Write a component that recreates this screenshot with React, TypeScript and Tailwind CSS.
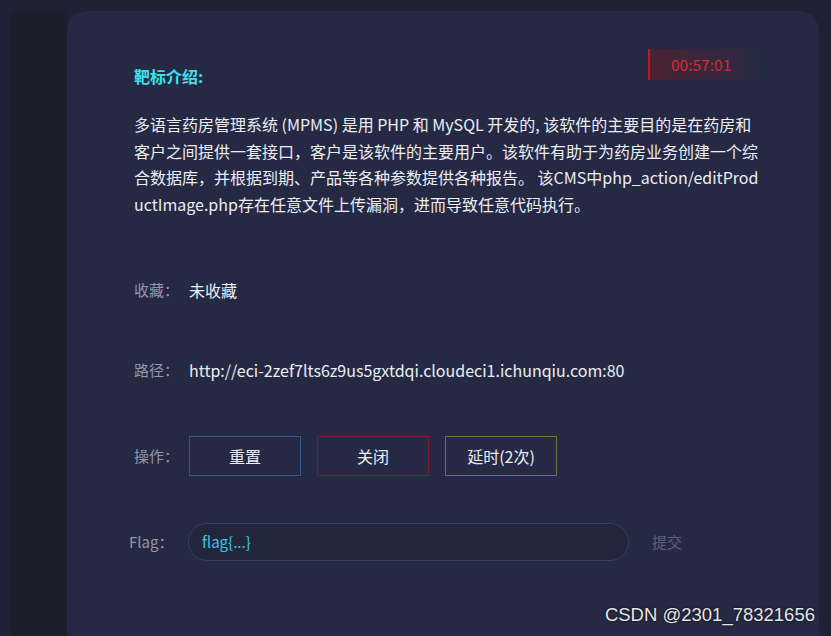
import React from "react";

const cjk = '"Noto Sans CJK SC", "Noto Sans", sans-serif';

export default function App() {
  return (
    <div
      className="relative flex h-[636px] w-[831px] overflow-hidden bg-[#1e2133]"
      style={{ fontFamily: cjk }}
    >
      <div className="w-[11px] shrink-0 bg-[#1f2236]" />
      <div className="flex flex-1 flex-col pt-[11px]">
        <div className="flex flex-1">
          <div className="w-[56px] shrink-0 bg-[#1b1e2b]" />
          <div className="flex-1 rounded-t-[20px] bg-[#252944] pl-[67px] pr-[52px] pt-[38px]">
            <div className="flex items-start justify-between">
              <div className="mt-[17px] text-[16px] font-bold leading-[20px] text-[#3de0ea]">
                靶标介绍:
              </div>
              <div className="flex h-[31px] w-[119px] items-center border-l-2 border-[#c8121c] bg-gradient-to-r from-[#4a2234] to-[#252944] pl-[21px] text-[15.5px] text-[#d42a32]">
                00:57:01
              </div>
            </div>
            <div className="mt-[25px] whitespace-nowrap text-[16px] leading-[26.5px] text-[#eceef4]">
              <div>多语言药房管理系统 (MPMS) 是用 PHP 和 MySQL 开发的, 该软件的主要目的是在药房和</div>
              <div>客户之间提供一套接口，客户是该软件的主要用户。该软件有助于为药房业务创建一个综</div>
              <div>合数据库，并根据到期、产品等各种参数提供各种报告。 该CMS中php_action/editProd</div>
              <div>uctImage.php存在任意文件上传漏洞，进而导致任意代码执行。</div>
            </div>
            <div className="mt-[60px] flex h-[26px] items-center">
              <div className="w-[55px] text-[15px] text-[#9397a8]">收藏：</div>
              <div className="text-[16px] text-[#eceef4]">未收藏</div>
            </div>
            <div className="mt-[54px] flex h-[26px] items-center">
              <div className="w-[55px] text-[15px] text-[#9397a8]">路径：</div>
              <div className="text-[16px] text-[#eceef4]">
                http://eci-2zef7lts6z9us5gxtdqi.cloudeci1.ichunqiu.com:80
              </div>
            </div>
            <div className="mt-[53px] flex items-center">
              <div className="w-[55px] text-[15px] text-[#9397a8]">操作：</div>
              <div className="flex gap-[16px]">
                <button className="h-[40px] w-[112px] border border-[#2d5d8c] text-[16px] text-[#eceef4]">
                  重置
                </button>
                <button className="h-[40px] w-[112px] border border-[#7e1a25] text-[16px] text-[#eceef4]">
                  关闭
                </button>
                <button className="h-[40px] w-[112px] border border-[#6a7640] text-[16px] text-[#eceef4]">
                  延时(2次)
                </button>
              </div>
            </div>
            <div className="-ml-[5px] mt-[47px] flex items-center">
              <div className="w-[59px] text-[15px] text-[#9397a8]">Flag：</div>
              <div className="flex h-[38px] w-[441px] items-center rounded-full border border-[#3a3f58] bg-[#22263c] pl-[13px] text-[15px] text-[#3cc6e0]">
                flag{"{...}"}
              </div>
              <div className="ml-[23px] text-[15px] text-[#5f6477]">提交</div>
            </div>
          </div>
          <div className="w-[12px] shrink-0" />
        </div>
      </div>
      <div
        className="absolute bottom-[10px] right-[16px] text-[18.5px] leading-[22px] text-[#e6e6e6]"
        style={{ fontFamily: '"Liberation Sans", Arial, sans-serif', textShadow: "0 0 2px #000" }}
      >
        CSDN @2301_78321656
      </div>
    </div>
  );
}
